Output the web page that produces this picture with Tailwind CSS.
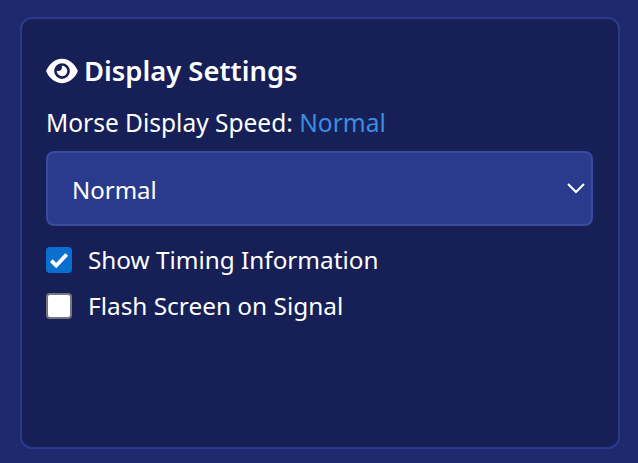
<!DOCTYPE html>
<html lang="en">
<head>
    <meta charset="UTF-8">
    <meta name="viewport" content="width=device-width, initial-scale=1.0">
    <title>Display Settings</title>
    <script src="https://cdn.jsdelivr.net/npm/@tailwindcss/browser@4"></script>
</head>
<body class="bg-[#1f2a6e] text-white font-['Noto_Sans',sans-serif] overflow-hidden">

    <div class="h-[463px] pt-[17px] pl-[20px] pr-[18px] pb-[14px]">
        <div class="h-full border-2 border-[#2b3a8c] rounded-[12px] bg-[#162057] pt-[30px] pl-[24px] pr-[25px]">

            <h2 class="flex items-center gap-[6px] text-[27.400px] leading-[44px] font-semibold">
                <svg class="w-[32px] h-[28px]" viewBox="0 0 576 512" fill="currentColor"><path d="M288 32c-80.800 0-145.500 36.800-192.600 80.600C48.600 156 17.300 208 2.500 243.700c-3.300 7.900-3.300 16.700 0 24.600C17.300 304 48.600 356 95.400 399.400 142.500 443.200 207.200 480 288 480s145.500-36.800 192.600-80.600c46.800-43.500 78.100-95.400 93-131.100 3.300-7.900 3.300-16.700 0-24.600-14.900-35.700-46.200-87.700-93-131.100C433.500 68.800 368.800 32 288 32zM144 256a144 144 0 1 1 288 0 144 144 0 1 1-288 0zm144-64c0 35.300-28.700 64-64 64-7.100 0-13.900-1.200-20.300-3.300-5.500-1.800-11.900 1.600-11.700 7.400.3 6.900 1.300 13.800 3.200 20.700 13.700 51.200 66.400 81.600 117.600 67.900s81.600-66.400 67.900-117.600c-11.100-41.500-47.800-69.400-88.600-71.100-5.800-.2-9.200 6.100-7.400 11.700 2.100 6.400 3.300 13.200 3.300 20.300z"/></svg>
                Display Settings
            </h2>

            <p class="mt-[12px] text-[24.500px] leading-[36px]">Morse Display Speed: <span class="text-[#3b8ee0]">Normal</span></p>

            <div class="relative mt-[10px]">
                <select class="appearance-none block w-full h-[75px] pt-[2px] pl-[24px] pr-[40px] text-[24px] bg-[#2a3a8c] border-2 border-[#3a4a9c] rounded-[8px] text-white">
                    <option>Normal</option>
                </select>
                <svg class="absolute right-[7px] top-[31px] w-[20px] h-[12px] pointer-events-none" viewBox="0 0 20 12" fill="none" stroke="currentColor" stroke-width="2"><path d="M2 2l8 8 8-8"/></svg>
            </div>

            <label class="flex items-center gap-[16px] mt-[16px] h-[36px] text-[24.300px]">
                <span class="flex items-center justify-center w-[26px] h-[26px] rounded-[4px] bg-[#0b6fd0]">
                    <svg class="w-[22px] h-[22px]" viewBox="0 0 20 20" fill="none" stroke="white" stroke-width="3.500"><path d="M3 10.500l4.500 4.500 9.500-10"/></svg>
                </span>
                Show Timing Information
            </label>

            <label class="flex items-center gap-[16px] mt-[10px] h-[36px] text-[24.400px]">
                <span class="w-[26px] h-[26px] rounded-[4px] bg-white border-2 border-[#767680]"></span>
                Flash Screen on Signal
            </label>
        </div>
    </div>

</body>
</html>
